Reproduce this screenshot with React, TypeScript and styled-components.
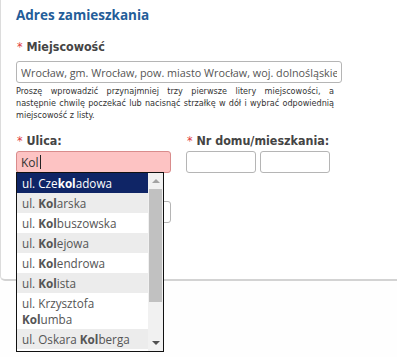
import React from "react";
import styled, { createGlobalStyle } from "styled-components";

const GlobalStyle = createGlobalStyle`
  html, body { margin: 0; padding: 0; background: #fefefe; }
  body { font-family: "Open Sans", sans-serif; }
`;

const streets = [
  "ul. Czekoladowa",
  "ul. Kolarska",
  "ul. Kolbuszowska",
  "ul. Kolejowa",
  "ul. Kolendrowa",
  "ul. Kolista",
  "ul. Krzysztofa Kolumba",
  "ul. Oskara Kolberga",
];

function highlight(text: string, query: string) {
  const i = text.toLowerCase().indexOf(query.toLowerCase());
  if (i < 0) return text;
  return (
    <>
      {text.slice(0, i)}
      <Hit>{text.slice(i, i + query.length)}</Hit>
      {text.slice(i + query.length)}
    </>
  );
}

export default function App() {
  return (
    <Page>
      <GlobalStyle />
      <Panel>
        <Title>Adres zamieszkania</Title>
        <Field>
          <Label $gap={6}><Star>*</Star> Miejscowość</Label>
          <TextInput $width={326} defaultValue="Wrocław, gm. Wrocław, pow. miasto Wrocław, woj. dolnośląskie" />
          <Help>
            Proszę wprowadzić przynajmniej trzy pierwsze litery miejscowości, a następnie chwilę poczekać lub nacisnąć strzałkę w dół i wybrać odpowiednią miejscowość z listy.
          </Help>
        </Field>
        <Row>
          <Column>
            <Label $gap={2}><Star>*</Star> Ulica:</Label>
            <ComboWrap>
              <StreetInput>Kol<Caret /></StreetInput>
              <Dropdown>
                <List>
                  {streets.map((s, i) => (
                    <Item key={s} $active={i === 0} $odd={i % 2 === 1}>
                      {highlight(s, "kol")}
                    </Item>
                  ))}
                </List>
                <Scrollbar>
                  <Arrow $up />
                  <Track>
                    <Thumb />
                  </Track>
                  <Arrow />
                </Scrollbar>
              </Dropdown>
            </ComboWrap>
            <Spacer />
            <TextInput $width={155} />
          </Column>
          <Column>
            <Label $gap={2}><Star>*</Star> Nr domu/mieszkania:</Label>
            <Pair>
              <TextInput $width={70} />
              <TextInput $width={70} />
            </Pair>
          </Column>
        </Row>
      </Panel>
    </Page>
  );
}

const Page = styled.div`
  min-height: 357px;
  background: #fefefe;
`;

const Panel = styled.section`
  box-sizing: border-box;
  height: 281px;
  padding: 5px 0 0 15px;
  background: #fff;
  border-left: 1px solid #dcdcdc;
  border-bottom: 2px solid #d3d3d3;
  border-bottom-left-radius: 5px;
`;

const Title = styled.h2`
  margin: 0 0 14px;
  font-family: "Open Sans", sans-serif;
  font-size: 13.5px;
  font-weight: 700;
  line-height: 20px;
  color: #245d99;
`;

const Field = styled.div`
  display: flex;
  flex-direction: column;
`;

const Label = styled.label<{ $gap: number }>`
  display: block;
  font-family: "DejaVu Sans", sans-serif;
  font-stretch: condensed;
  font-size: 12.4px;
  font-weight: bold;
  line-height: 16px;
  color: #444;
  margin: 0 0 ${(p) => p.$gap}px 1px;
`;

const Star = styled.span`
  color: #e0393e;
  font-weight: normal;
`;

const TextInput = styled.input<{ $width: number }>`
  box-sizing: border-box;
  width: ${(p) => p.$width}px;
  height: 22px;
  padding: 0 4px;
  border: 1px solid #b5b5b5;
  border-radius: 3px;
  background: #fff;
  font-family: "Open Sans", sans-serif;
  font-size: 10.8px;
  color: #555;
  outline: none;
`;

const Help = styled.p`
  width: 318px;
  margin: 2px 0 0;
  font-family: "DejaVu Sans", sans-serif;
  font-stretch: condensed;
  font-size: 9px;
  line-height: 12px;
  text-align: justify;
  color: #333;
`;

const Row = styled.div`
  display: flex;
  gap: 15px;
  margin-top: 12px;
`;

const Column = styled.div`
  display: flex;
  flex-direction: column;
`;

const Pair = styled.div`
  display: flex;
  gap: 4px;
`;

const ComboWrap = styled.div`
  position: relative;
`;

const StreetInput = styled.div`
  box-sizing: border-box;
  width: 155px;
  height: 22px;
  padding: 0 4px;
  display: flex;
  align-items: center;
  border: 1px solid #d98c8c;
  border-radius: 3px;
  background: #fdc3c3;
  font-family: "Open Sans", sans-serif;
  font-size: 12px;
  color: #333;
`;

const Caret = styled.span`
  display: inline-block;
  width: 1px;
  height: 14px;
  margin-left: 1px;
  background: #222;
`;

const Spacer = styled.div`
  height: 28px;
`;

const Dropdown = styled.div`
  position: absolute;
  top: 21px;
  left: 0;
  z-index: 10;
  display: flex;
  width: 148px;
  box-sizing: border-box;
  border: 1px solid #111;
  background: #fff;
`;

const List = styled.ul`
  flex: 1;
  margin: 0;
  padding: 0 0 2px;
  list-style: none;
`;

const Item = styled.li<{ $active: boolean; $odd: boolean }>`
  padding: 2px 5px;
  font-family: "Open Sans", sans-serif;
  font-size: 11.7px;
  line-height: 16px;
  color: ${(p) => (p.$active ? "#fff" : "#555")};
  background: ${(p) => (p.$active ? "#0f2566" : p.$odd ? "#ececec" : "#fff")};
`;

const Hit = styled.b`
  font-weight: 700;
  color: inherit;
`;

const Scrollbar = styled.div`
  width: 15px;
  display: flex;
  flex-direction: column;
  background: #f1f1f1;
`;

const Arrow = styled.div<{ $up?: boolean }>`
  height: 16px;
  display: flex;
  align-items: center;
  justify-content: center;
  &::after {
    content: "";
    border-left: 4px solid transparent;
    border-right: 4px solid transparent;
    ${(p) => (p.$up ? "border-bottom: 4px solid #a3a3a3;" : "border-top: 4px solid #505050;")}
  }
`;

const Track = styled.div`
  flex: 1;
  padding: 0 1px;
`;

const Thumb = styled.div`
  height: 113px;
  background: #c1c1c1;
`;
